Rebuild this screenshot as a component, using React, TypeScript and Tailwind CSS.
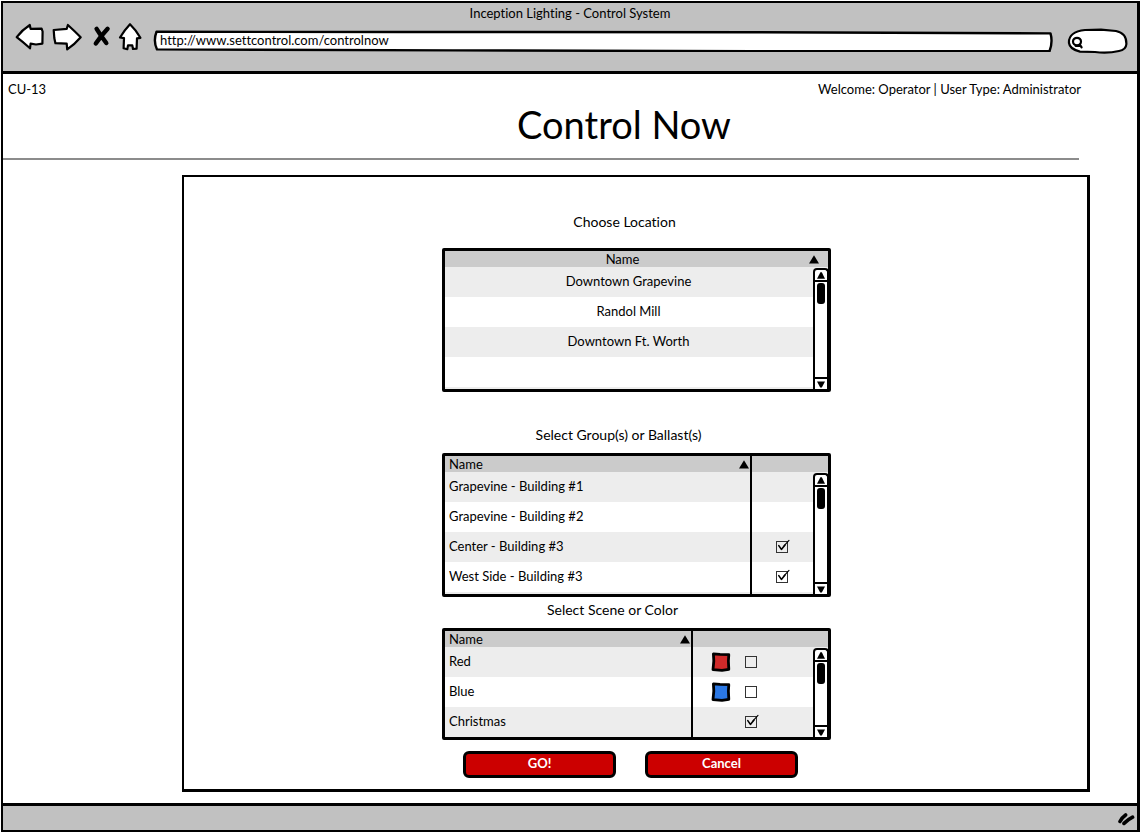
import type { ReactNode } from 'react';

function IconButton({ label, box, className, children }: { label: string; box: string; className: string; children: ReactNode }) {
  return (
    <button type="button" aria-label={label} className={`h-8 shrink-0 ${className}`}>
      <svg viewBox={box} className="h-full w-full" fill="white" stroke="black" strokeWidth="2.2" strokeLinejoin="round" strokeLinecap="round">
        {children}
      </svg>
    </button>
  );
}

function BrowserBar() {
  return (
    <header className="border-b-[3px] border-black bg-[#c1c1c1] pt-0.5 pb-[17px]">
      <p className="text-center leading-4">Inception Lighting - Control System</p>
      <div className="mt-px flex h-8 items-center pr-2 pl-[11px]">
        <IconButton label="Back" box="14 22 32 32" className="w-8">
          <path d="M16.7 37.2Q22 30 29.8 25L30.6 28.9L41.6 28.6L42.6 31.5L42.4 43.6L36 44.5L30.6 43.6L30 48.3Q23 42 16.7 37.2Z" />
        </IconButton>
        <IconButton label="Forward" box="51 22 32 32" className="ml-[5px] w-8">
          <path d="M53.7 30L66.7 28.9L67.9 25Q75 31.5 80.7 37.2Q75 44 67.2 49.3L66.7 43.6L55.4 43.2L54.3 38Z" />
        </IconButton>
        <IconButton label="Stop" box="90 22 24 32" className="ml-[7px] w-6">
          <path d="M96.6 28.8Q101 36 106.3 43M107.6 28.8Q101 36 95.8 43.4" fill="none" strokeWidth="4.4" />
        </IconButton>
        <IconButton label="Home" box="117 22 26 32" className="ml-[3px] w-[26px]">
          <path d="M130 24.2Q124.5 30 120 37.5L124 38.2L123.6 48.2L127.3 49.2L128 45.4L132.3 45.4L133 49L136.6 48.6L137 38.3L140.4 37.8Q136 30 130 24.2Z" />
        </IconButton>
        <div className="relative mt-1.5 ml-2.5 h-[22px] min-w-0 flex-1">
          <svg viewBox="0 0 900 22" preserveAspectRatio="none" className="absolute inset-0 h-full w-full" fill="white" stroke="black" strokeWidth="2.4" strokeLinejoin="round">
            <path vectorEffect="non-scaling-stroke" d="M3.5 1.8L250 2L600 2.2L897.5 3.4Q900 12 896.5 21.2L600 21.2L300 20.4L4 19.4Q0 11 3.5 1.8Z" />
          </svg>
          <input aria-label="Address" defaultValue="http://www.settcontrol.com/controlnow" className="relative block h-5 w-full bg-transparent px-[7px] outline-none" />
        </div>
        <div className="relative mt-1.5 ml-3.5 h-[26px] w-[62px] shrink-0">
          <svg viewBox="0 0 62 26" className="absolute inset-0 h-full w-full" fill="white" stroke="black" strokeWidth="2.2" strokeLinecap="round">
            <path d="M2 15C1.5 8 7 3 18 2L34 1.6L49 3C57 4.5 59.5 9 59.4 16C59 21 56 22.4 52 23C45 24.6 36 25 28 24L13 23.6C6 22 2.5 19 2 15Z" />
            <ellipse cx="10" cy="13.6" rx="4" ry="3.8" />
            <path d="M12.8 16.6L14.6 19.4M8.6 17.8L13.4 18" />
          </svg>
          <input type="search" aria-label="Search" className="relative h-full w-full bg-transparent pr-3 pl-5 outline-none" />
        </div>
      </div>
    </header>
  );
}

function SortArrow() {
  return (
    <svg viewBox="0 0 10 9" className="h-[9px] w-2.5 shrink-0">
      <path d="M5 0.3L10 8.5H0Z" />
    </svg>
  );
}

function Scrollbar() {
  return (
    <div className="absolute top-[17px] -right-px bottom-0 flex w-4 flex-col rounded-t border-2 border-b-0 border-black bg-white">
      <button type="button" aria-label="Scroll up" className="flex h-3 items-center justify-center border-b-2 border-black">
        <svg viewBox="0 0 8 7" className="h-[7px] w-2">
          <path d="M3.4 0.2H4.8L8 6.8H0Z" />
        </svg>
      </button>
      <div className="flex-1 pt-px pl-0.5">
        <div className="h-[21px] w-2 rounded-[3px] bg-black" />
      </div>
      <button type="button" aria-label="Scroll down" className="flex h-3 items-center justify-center border-t-2 border-black">
        <svg viewBox="0 0 8 7" className="h-[7px] w-2">
          <path d="M3.2 6.6H4.8L8 0.4H0Z" />
        </svg>
      </button>
    </div>
  );
}

function Tick({ label, checked = false }: { label: string; checked?: boolean }) {
  return (
    <span className="relative mx-auto block h-3 w-3">
      <input type="checkbox" aria-label={label} defaultChecked={checked} className="peer block h-3 w-3 appearance-none border border-[#333] bg-transparent" />
      <svg viewBox="0 0 15 14" className="pointer-events-none absolute -top-0.5 left-0 hidden h-3.5 w-[15px] peer-checked:block" fill="none" stroke="black" strokeLinecap="round" strokeLinejoin="round">
        <path strokeWidth="1.6" d="M2.8 6.6L5.4 10.4L9 6" />
        <path strokeWidth="1.1" d="M8 6.8L13 1.4" />
      </svg>
    </span>
  );
}

function Swatch({ color }: { color: string }) {
  return (
    <svg viewBox="0 0 20 20" className="block h-5 w-5" strokeLinejoin="round">
      <path d="M2.4 1.8L9 2.4L17.8 2.6L17.4 9L17.8 17.4L11 18.4L2 17.6L2.8 9Z" fill={color} stroke="black" strokeWidth="2.8" />
    </svg>
  );
}

function ListFrame({ id, children }: { id: string; children: ReactNode }) {
  return (
    <div className="relative rounded-xs border-[3px] border-black bg-[#ededed]">
      <table aria-labelledby={id} className="w-full table-fixed border-collapse">
        {children}
      </table>
      <Scrollbar />
    </div>
  );
}

const stripe = 'h-[30px] odd:bg-[#ededed] even:bg-white';
const divided = 'border-r-2 border-black';

function NameHeader() {
  return (
    <th className={`p-0 pr-px font-normal ${divided}`}>
      <span className="flex items-center justify-between pl-1">
        Name
        <SortArrow />
      </span>
    </th>
  );
}

const locations = ['Downtown Grapevine', 'Randol Mill', 'Downtown Ft. Worth', ''];

const groups = [
  { name: 'Grapevine - Building #1', checked: null },
  { name: 'Grapevine - Building #2', checked: null },
  { name: 'Center - Building #3', checked: true },
  { name: 'West Side - Building #3', checked: true },
];

const scenes = [
  { name: 'Red', color: '#d02a2a', checked: false },
  { name: 'Blue', color: '#2b78e4', checked: false },
  { name: 'Christmas', color: null, checked: true },
];

function Locations() {
  return (
    <ListFrame id="locations">
      <colgroup>
        <col />
        <col className="w-4" />
      </colgroup>
      <thead>
        <tr className="h-4 bg-[#cbcbcb] leading-4">
          <th colSpan={2} className="p-0 font-normal">
            <span className="flex items-center">
              <span className="flex-1">Name</span>
              <span className="flex w-7 justify-center">
                <SortArrow />
              </span>
            </span>
          </th>
        </tr>
      </thead>
      <tbody>
        {locations.map((name) => (
          <tr key={name} className={stripe}>
            <td className="p-0 text-center">{name}</td>
            <td className="p-0" />
          </tr>
        ))}
      </tbody>
      <tfoot>
        <tr className="h-0.5">
          <td colSpan={2} className="p-0" />
        </tr>
      </tfoot>
    </ListFrame>
  );
}

function Groups() {
  return (
    <ListFrame id="groups">
      <colgroup>
        <col />
        <col className="w-[61px]" />
        <col className="w-4" />
      </colgroup>
      <thead>
        <tr className="h-4 bg-[#cbcbcb] leading-4">
          <NameHeader />
          <th colSpan={2} className="p-0" />
        </tr>
      </thead>
      <tbody>
        {groups.map((group) => (
          <tr key={group.name} className={stripe}>
            <td className={`p-0 pl-1 ${divided}`}>{group.name}</td>
            <td className="p-0">{group.checked !== null && <Tick label={group.name} checked={group.checked} />}</td>
            <td className="p-0" />
          </tr>
        ))}
      </tbody>
      <tfoot>
        <tr className="h-0.5">
          <td className={`p-0 ${divided}`} />
          <td colSpan={2} className="p-0" />
        </tr>
      </tfoot>
    </ListFrame>
  );
}

function Scenes() {
  return (
    <ListFrame id="scenes">
      <colgroup>
        <col />
        <col className="w-[120px]" />
        <col className="w-4" />
      </colgroup>
      <thead>
        <tr className="h-4 bg-[#cbcbcb] leading-4">
          <NameHeader />
          <th colSpan={2} className="p-0" />
        </tr>
      </thead>
      <tbody>
        {scenes.map((scene) => (
          <tr key={scene.name} className={stripe}>
            <td className={`p-0 pl-1 ${divided}`}>{scene.name}</td>
            <td className="p-0 pl-[18px]">
              <span className="flex items-center gap-3.5">
                <span className="w-5">{scene.color && <Swatch color={scene.color} />}</span>
                <span>
                  <Tick label={scene.name} checked={scene.checked} />
                </span>
              </span>
            </td>
            <td className="p-0" />
          </tr>
        ))}
      </tbody>
    </ListFrame>
  );
}

function ActionButton({ children }: { children: ReactNode }) {
  return (
    <button type="button" className="h-[27px] w-[153px] rounded-md border-[3px] border-black bg-[#cc0000] pb-1 leading-4 font-bold text-white">
      {children}
    </button>
  );
}

export default function App() {
  return (
    <div className="flex min-h-screen flex-col bg-white p-px font-['Lato',sans-serif] text-[13px] text-black [font-variant-ligatures:none]">
      <div className="flex flex-1 flex-col border-2 border-r-[3px] border-b-[3px] border-black">
        <BrowserBar />
        <main className="flex-1 pb-[11px]">
          <div className="flex justify-between pt-[7px] pr-14 pl-[5px] leading-4">
            <span>CU-13</span>
            <span>Welcome: Operator | User Type: Administrator</span>
          </div>
          <h1 className="pt-[5px] pl-[108px] text-center text-[38px] leading-[44px]">Control Now</h1>
          <hr className="mt-3 mr-[58px] border-t-2 border-[#8c8c8c]" />
          <section className="mt-[15px] mr-[47px] ml-[179px] border-2 border-r-[3px] border-b-[3px] border-black pt-[37px] pb-[11px] pl-0.5">
            <div className="mx-auto w-full max-w-[389px]">
              <h2 id="locations" className="mb-[18px] pr-6 text-center text-sm leading-4">Choose Location</h2>
              <Locations />
              <h2 id="groups" className="mt-[35px] mb-2.5 pr-9 text-center text-sm leading-4">Select Group(s) or Ballast(s)</h2>
              <Groups />
              <h2 id="scenes" className="mt-[5px] mb-2.5 pr-12 text-center text-sm leading-4">Select Scene or Color</h2>
              <Scenes />
              <div className="mt-[11px] flex gap-[29px] pl-[21px]">
                <ActionButton>GO!</ActionButton>
                <ActionButton>Cancel</ActionButton>
              </div>
            </div>
          </section>
        </main>
        <footer className="flex h-[27px] items-end justify-end border-t-[3px] border-black bg-[#c1c1c1] pr-px pb-1">
          <svg viewBox="1119 811 18 15" className="h-[15px] w-[18px]" fill="none" stroke="black" strokeLinecap="round">
            <path strokeWidth="3.6" d="M1121 821.5Q1123 817.5 1126.6 815M1125 823.4Q1129 819.5 1133.6 817.2" />
          </svg>
        </footer>
      </div>
    </div>
  );
}
